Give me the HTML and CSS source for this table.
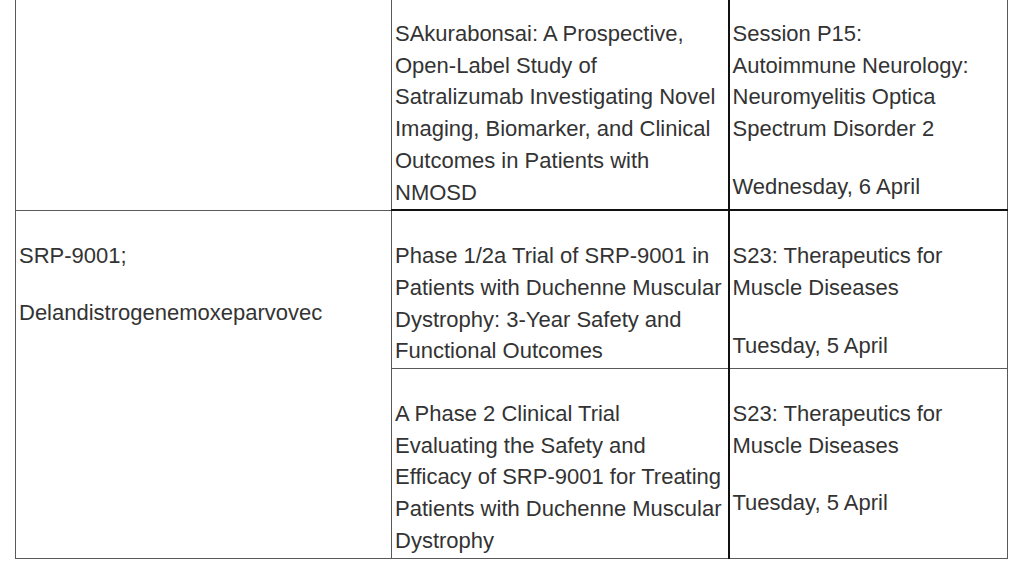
FILE: index.html
```html
<!DOCTYPE html>
<html lang="en">
<head>
<meta charset="utf-8">
<title>Sessions</title>
<link rel="stylesheet" href="styles.css">
</head>
<body>
<table class="sessions">
  <colgroup>
    <col class="col-drug">
    <col class="col-title">
    <col class="col-session">
  </colgroup>
  <tr class="row-first">
    <td class="drug"></td>
    <td class="title"><p>SAkurabonsai: A Prospective, Open-Label Study of Satralizumab Investigating Novel Imaging, Biomarker, and Clinical Outcomes in Patients with NMOSD</p></td>
    <td class="session"><p>Session P15:<br>Autoimmune Neurology: Neuromyelitis Optica Spectrum Disorder 2</p><p>Wednesday, 6 April</p></td>
  </tr>
  <tr class="row-split">
    <td class="drug" rowspan="2"><p>SRP-9001;</p><p>Delandistrogenemoxeparvovec</p></td>
    <td class="title"><p>Phase 1/2a Trial of SRP-9001 in Patients with Duchenne Muscular Dystrophy: 3-Year Safety and Functional Outcomes</p></td>
    <td class="session"><p>S23: Therapeutics for Muscle Diseases</p><p>Tuesday, 5 April</p></td>
  </tr>
  <tr>
    <td class="title"><p>A Phase 2 Clinical Trial Evaluating the Safety and Efficacy of SRP-9001 for Treating Patients with Duchenne Muscular Dystrophy</p></td>
    <td class="session"><p>S23: Therapeutics for Muscle Diseases</p><p>Tuesday, 5 April</p></td>
  </tr>
</table>
</body>
</html>
```

FILE: styles.css
```css
html, body {
  margin: 0;
  padding: 0;
  background: #ffffff;
  overflow: hidden;
}

body {
  font-family: "Liberation Sans", Arial, sans-serif;
  font-size: 22px;
  line-height: 31.7px;
  color: #333333;
}

.sessions {
  border-collapse: collapse;
  table-layout: fixed;
  width: 992px;
  margin: -12px 0 0 15px;
}

.col-drug { width: 376px; }
.col-title { width: 337px; }
.col-session { width: 279px; }

.sessions td {
  vertical-align: top;
  border: 1px solid #5a5a5a;
  padding: 3px 3px 1px 3px;
}

.sessions td.session {
  border-left: 2px solid #111111;
  padding-left: 3px;
}

.row-first td.title,
.row-first td.session {
  border-bottom: 2px solid #111111;
}

.sessions p {
  margin: 26px 0 0 0;
}
```
